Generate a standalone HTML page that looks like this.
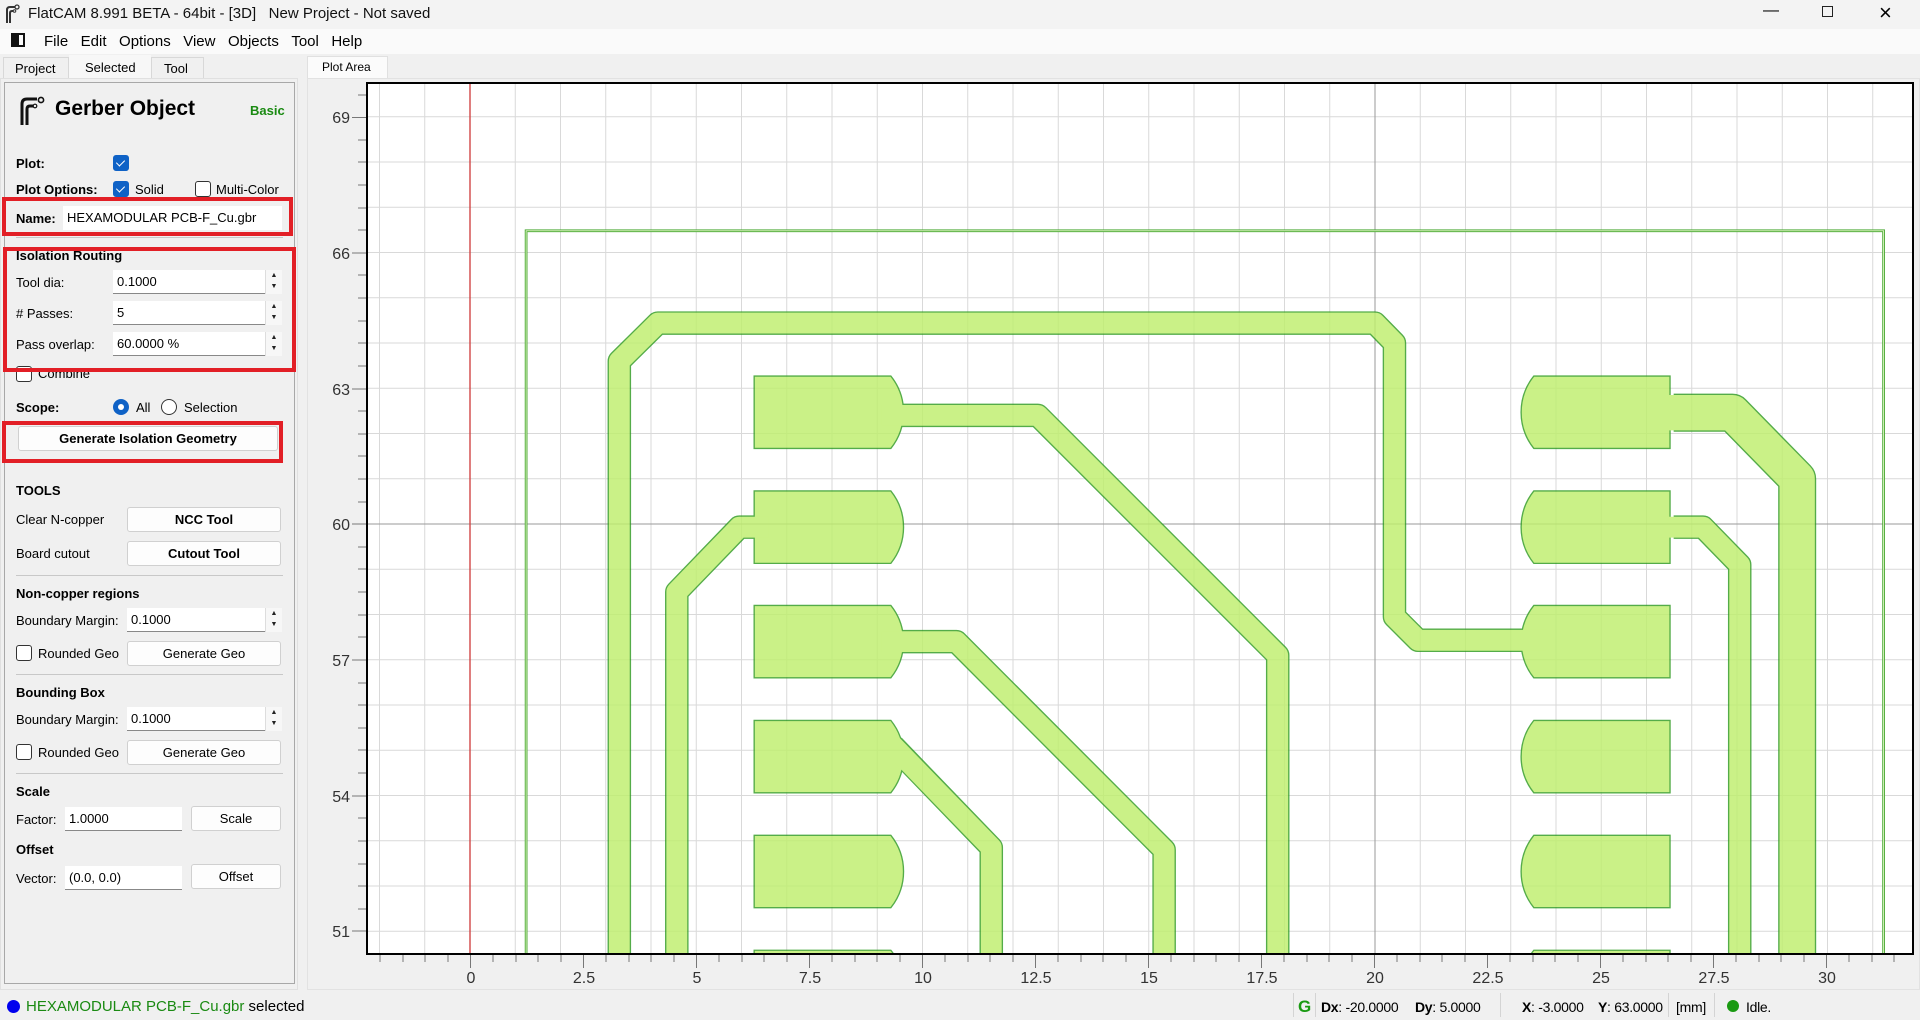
<!DOCTYPE html>
<html><head><meta charset="utf-8"><style>
*{box-sizing:border-box;margin:0;padding:0}
html,body{width:1920px;height:1020px;overflow:hidden}
body{background:#f0f0f0;font-family:"Liberation Sans",sans-serif;font-size:13px;color:#000;position:relative}
.a{position:absolute;white-space:nowrap}
.b{font-weight:bold}
.inp{position:absolute;background:#fff;border-bottom:1px solid #888;height:24px;line-height:24px;padding-left:4px;font-size:13px}
.spin{position:absolute;width:17px;height:24px;background:#f7f7f7;border-left:1px solid #ddd;font-size:7px;line-height:11px;text-align:center;color:#222}
.btn{position:absolute;background:#fdfdfd;border:1px solid #d0d0d0;border-radius:3px;text-align:center;height:25px;line-height:23px;font-size:13px}
.cb{position:absolute;width:16px;height:16px;border:1px solid #333;border-radius:3px;background:#fff}
.cbk{position:absolute;width:16px;height:16px;border-radius:3px;background:#0f62c6}
.cbk:after{content:"";position:absolute;left:5px;top:3px;width:4px;height:7px;border:solid #fff;border-width:0 1.5px 1.5px 0;transform:rotate(45deg)}
.sep{position:absolute;left:16px;width:267px;height:1px;background:#c8c8c8}
.red{position:absolute;border:4px solid #e21f26}
.st{position:absolute;top:999px;font-size:14px;letter-spacing:-0.3px;white-space:nowrap}
.vs{position:absolute;top:993px;width:1px;height:24px;background:#d4d4d4}
</style></head><body>
<div class="a" style="left:0;top:0;width:1920px;height:29px;background:#f3f3f3"></div>
<svg class="a" style="left:4px;top:4px" width="16" height="20" viewBox="0 0 16 20"><path d="M3 19V6q0-3 3-3h5M6 19V9q0-2 2-2h1" fill="none" stroke="#333" stroke-width="2"/><circle cx="13" cy="3" r="2" fill="none" stroke="#333" stroke-width="1.3"/><circle cx="10.5" cy="7" r="1.3" fill="none" stroke="#333" stroke-width="1"/></svg>
<div class="a" style="left:28px;top:5px;font-size:15px;color:#111">FlatCAM 8.991 BETA - 64bit - [3D]&nbsp;&nbsp;&nbsp;New Project - Not saved</div>
<div class="a" style="left:1763px;top:2px;font-size:16px">&#8212;</div>
<div class="a" style="left:1822px;top:6px;width:11px;height:11px;border:1px solid #222"></div>
<div class="a" style="left:1879px;top:0px;font-size:22px;font-weight:300">&#215;</div>
<div class="a" style="left:0;top:29px;width:1920px;height:25px;background:#fafafa"></div>
<div class="a" style="left:11px;top:33px;width:14px;height:14px;border:2px solid #111;border-left-width:8px"></div>
<div class="a" style="left:44px;top:33px;font-size:15px">File&nbsp;&nbsp;&nbsp;Edit&nbsp;&nbsp;&nbsp;Options&nbsp;&nbsp;&nbsp;View&nbsp;&nbsp;&nbsp;Objects&nbsp;&nbsp;&nbsp;Tool&nbsp;&nbsp;&nbsp;Help</div>
<div class="a" style="left:3px;top:57px;width:66px;height:22px;background:#f0f0f0;border:1px solid #d8d8d8;border-bottom:none"></div>
<div class="a" style="left:15px;top:61px">Project</div>
<div class="a" style="left:69px;top:55px;width:82px;height:24px;background:#f7f7f7"></div>
<div class="a" style="left:85px;top:60px">Selected</div>
<div class="a" style="left:151px;top:57px;width:53px;height:22px;border:1px solid #d8d8d8;border-bottom:none"></div>
<div class="a" style="left:164px;top:61px">Tool</div>
<div class="a" style="left:307px;top:56px;width:81px;height:22px;background:#fbfbfb;border:1px solid #e0e0e0;border-bottom:none"></div>
<div class="a" style="left:322px;top:60px;font-size:12px">Plot Area</div>
<div class="a" style="left:0;top:78px;width:298px;height:912px;border:1px solid #e0e0e0"></div>
<div class="a" style="left:4px;top:82px;width:291px;height:902px;border:1px solid #a8a8a8;background:#f0f0f0"></div>
<svg class="a" style="left:18px;top:96px" width="28" height="30" viewBox="0 0 28 30"><path d="M4 29V8q0-5 5-5h10M9 29V13q0-3 3-3h3" fill="none" stroke="#111" stroke-width="3"/><circle cx="23" cy="4" r="2.6" fill="none" stroke="#111" stroke-width="1.6"/><circle cx="17" cy="10" r="1.8" fill="none" stroke="#111" stroke-width="1.2"/></svg>
<div class="a b" style="left:55px;top:97px;font-size:21px">Gerber Object</div>
<div class="a b" style="left:250px;top:103px;color:#1a8a12">Basic</div>
<div class="a b" style="left:16px;top:156px">Plot:</div>
<div class="cbk" style="left:113px;top:155px"></div>
<div class="a b" style="left:16px;top:182px">Plot Options:</div>
<div class="cbk" style="left:113px;top:181px"></div>
<div class="a" style="left:135px;top:182px">Solid</div>
<div class="cb" style="left:195px;top:181px"></div>
<div class="a" style="left:216px;top:182px">Multi-Color</div>
<div class="a b" style="left:16px;top:211px">Name:</div>
<div class="inp" style="left:63px;top:206px;width:219px;border:none">HEXAMODULAR PCB-F_Cu.gbr</div>
<div class="red" style="left:2px;top:197px;width:291px;height:39px"></div>
<div class="sep" style="top:237px"></div>
<div class="a b" style="left:16px;top:248px">Isolation Routing</div>
<div class="a" style="left:16px;top:275px">Tool dia:</div>
<div class="inp" style="left:113px;top:270px;width:169px">0.1000</div><div class="spin" style="left:265px;top:270px">&#9650;<br>&#9660;</div>
<div class="a" style="left:16px;top:306px"># Passes:</div>
<div class="inp" style="left:113px;top:301px;width:169px">5</div><div class="spin" style="left:265px;top:301px">&#9650;<br>&#9660;</div>
<div class="a" style="left:16px;top:337px">Pass overlap:</div>
<div class="inp" style="left:113px;top:332px;width:169px">60.0000 %</div><div class="spin" style="left:265px;top:332px">&#9650;<br>&#9660;</div>
<div class="cb" style="left:16px;top:366px"></div>
<div class="a" style="left:38px;top:366px">Combine</div>
<div class="red" style="left:3px;top:247px;width:293px;height:125px"></div>
<div class="a b" style="left:16px;top:400px">Scope:</div>
<div class="a" style="left:113px;top:399px;width:16px;height:16px;border-radius:50%;background:#0f62c6"><div style="margin:5px;width:6px;height:6px;border-radius:50%;background:#fff"></div></div>
<div class="a" style="left:136px;top:400px">All</div>
<div class="a" style="left:161px;top:399px;width:16px;height:16px;border-radius:50%;border:1px solid #333;background:#fff"></div>
<div class="a" style="left:184px;top:400px">Selection</div>
<div class="btn b" style="left:18px;top:426px;width:260px">Generate Isolation Geometry</div>
<div class="red" style="left:2px;top:421px;width:281px;height:42px"></div>
<div class="a b" style="left:16px;top:483px">TOOLS</div>
<div class="a" style="left:16px;top:512px">Clear N-copper</div>
<div class="btn b" style="left:127px;top:507px;width:154px">NCC Tool</div>
<div class="a" style="left:16px;top:546px">Board cutout</div>
<div class="btn b" style="left:127px;top:541px;width:154px">Cutout Tool</div>
<div class="sep" style="top:575px"></div>
<div class="a b" style="left:16px;top:586px">Non-copper regions</div>
<div class="a" style="left:16px;top:613px">Boundary Margin:</div>
<div class="inp" style="left:127px;top:608px;width:155px">0.1000</div><div class="spin" style="left:265px;top:608px">&#9650;<br>&#9660;</div>
<div class="cb" style="left:16px;top:645px"></div>
<div class="a" style="left:38px;top:646px">Rounded Geo</div>
<div class="btn" style="left:127px;top:641px;width:154px">Generate Geo</div>
<div class="sep" style="top:674px"></div>
<div class="a b" style="left:16px;top:685px">Bounding Box</div>
<div class="a" style="left:16px;top:712px">Boundary Margin:</div>
<div class="inp" style="left:127px;top:707px;width:155px">0.1000</div><div class="spin" style="left:265px;top:707px">&#9650;<br>&#9660;</div>
<div class="cb" style="left:16px;top:744px"></div>
<div class="a" style="left:38px;top:745px">Rounded Geo</div>
<div class="btn" style="left:127px;top:740px;width:154px">Generate Geo</div>
<div class="sep" style="top:773px"></div>
<div class="a b" style="left:16px;top:784px">Scale</div>
<div class="a" style="left:16px;top:812px">Factor:</div>
<div class="inp" style="left:65px;top:807px;width:117px">1.0000</div>
<div class="btn" style="left:191px;top:806px;width:90px">Scale</div>
<div class="a b" style="left:16px;top:842px">Offset</div>
<div class="a" style="left:16px;top:871px">Vector:</div>
<div class="inp" style="left:65px;top:866px;width:117px">(0.0, 0.0)</div>
<div class="btn" style="left:191px;top:864px;width:90px">Offset</div>
<div class="a" style="left:307px;top:78px;width:1613px;height:912px;border:1px solid #e2e2e2;background:#f0f0f0"></div>
<div class="a" style="left:366px;top:82px;width:1548px;height:873px;background:#fff;border:2px solid #000"></div>
<svg class="a" style="left:0;top:0" width="1920" height="1020">
<defs><clipPath id="c"><rect x="368" y="84" width="1544" height="869"/></clipPath></defs>
<g clip-path="url(#c)">
<g transform="matrix(45.25 0 0 -45.25 470 3239)">
<g fill="none" stroke="#d9d9d9" stroke-width="0.022">
<path d="M-2 40V80M-1 40V80M1 40V80M2 40V80M3 40V80M4 40V80M5 40V80M6 40V80M7 40V80M8 40V80M9 40V80M10 40V80M11 40V80M12 40V80M13 40V80M14 40V80M15 40V80M16 40V80M17 40V80M18 40V80M19 40V80M21 40V80M22 40V80M23 40V80M24 40V80M25 40V80M26 40V80M27 40V80M28 40V80M29 40V80M30 40V80M31 40V80M32 40V80M33 40V80"/>
<path d="M-5 49H40M-5 50H40M-5 51H40M-5 52H40M-5 53H40M-5 54H40M-5 55H40M-5 56H40M-5 57H40M-5 58H40M-5 59H40M-5 61H40M-5 62H40M-5 63H40M-5 64H40M-5 65H40M-5 66H40M-5 67H40M-5 68H40M-5 69H40M-5 70H40"/>
</g>
<path d="M20 40V80M-5 60H40" stroke="#9a9a9a" stroke-width="0.022" fill="none"/>
<path d="M0 40V80" stroke="#d04040" stroke-width="0.03" fill="none"/>
<rect x="1.24" y="40" width="30.0" height="26.48" fill="none" stroke="#48a832" stroke-width="0.06"/>
<rect x="1.24" y="40" width="30.0" height="26.48" fill="none" stroke="#e4f8c8" stroke-width="0.02"/>
<g opacity="0.82">
<g fill="none" stroke="#2f9a22" stroke-linejoin="round">
<g stroke-width="0.52">
<path d="M3.3 45V63.6L4.15 64.44H20.0L20.43 64.0V57.95L20.95 57.43H23.6"/>
<path d="M9.4 62.4H12.55L17.85 57.1V45"/>
<path d="M6.4 59.93H5.95L4.57 58.5V45"/>
<path d="M9.4 57.4H10.75L15.34 52.8V45"/>
<path d="M9.35 55.1L11.52 52.85V45"/>
<path d="M26.6 59.93H27.25L28.06 59.1V45"/>
</g>
<path d="M26.6 62.46H27.9L29.33 61.0V45" stroke-width="0.84"/>
</g>
<g fill="#bfef6d" stroke="#2f9a22" stroke-width="0.03">
<path d="M6.28 61.67H9.3A1.28 1.28 0 0 1 9.3 63.27H6.28Z"/>
<path d="M6.28 59.13H9.3A1.28 1.28 0 0 1 9.3 60.73H6.28Z"/>
<path d="M6.28 56.6H9.3A1.28 1.28 0 0 1 9.3 58.2H6.28Z"/>
<path d="M6.28 54.06H9.3A1.28 1.28 0 0 1 9.3 55.66H6.28Z"/>
<path d="M6.28 51.52H9.3A1.28 1.28 0 0 1 9.3 53.12H6.28Z"/>
<path d="M6.28 48.98H9.3A1.28 1.28 0 0 1 9.3 50.58H6.28Z"/>
<path d="M23.51 63.27H26.52V61.67H23.51A1.28 1.28 0 0 0 23.51 63.27Z"/>
<path d="M23.51 60.73H26.52V59.13H23.51A1.28 1.28 0 0 0 23.51 60.73Z"/>
<path d="M23.51 58.2H26.52V56.6H23.51A1.28 1.28 0 0 0 23.51 58.2Z"/>
<path d="M23.51 55.66H26.52V54.06H23.51A1.28 1.28 0 0 0 23.51 55.66Z"/>
<path d="M23.51 53.12H26.52V51.52H23.51A1.28 1.28 0 0 0 23.51 53.12Z"/>
<path d="M23.51 50.58H26.52V48.98H23.51A1.28 1.28 0 0 0 23.51 50.58Z"/>
</g>
<g fill="none" stroke="#bfef6d" stroke-linejoin="round">
<g stroke-width="0.46">
<path d="M3.3 45V63.6L4.15 64.44H20.0L20.43 64.0V57.95L20.95 57.43H23.8"/>
<path d="M9.1 62.4H12.55L17.85 57.1V45"/>
<path d="M6.6 59.93H5.95L4.57 58.5V45"/>
<path d="M9.1 57.4H10.75L15.34 52.8V45"/>
<path d="M9.1 55.35L11.52 52.85V45"/>
<path d="M26.3 59.93H27.25L28.06 59.1V45"/>
</g>
<path d="M26.3 62.46H27.9L29.33 61.0V45" stroke-width="0.78"/>
</g>
</g>
</g>
</g>
</svg>
<svg class="a" style="left:0;top:0" width="1920" height="1020">
<g stroke="#777" stroke-width="1">
<path d="M352 117.5H366M352 253H366M352 389H366M352 524H366M352 660H366M352 796H366M352 931H366"/>
<path d="M358 140H366M358 162H366M358 185H366M358 208H366M358 230H366M358 275H366M358 298H366M358 321H366M358 343H366M358 366H366M358 411H366M358 434H366M358 456H366M358 479H366M358 502H366M358 547H366M358 569H366M358 592H366M358 615H366M358 637H366M358 683H366M358 705H366M358 728H366M358 750H366M358 773H366M358 818H366M358 841H366M358 864H366M358 886H366M358 909H366M358 95H366"/>
<path d="M470.5 955V968M583.5 955V968M696.5 955V968M809.5 955V968M922.5 955V968M1035.5 955V968M1148.5 955V968M1261.5 955V968M1374.5 955V968M1487.5 955V968M1600.5 955V968M1713.5 955V968M1826.5 955V968"/>
<path d="M380 955V962M403 955V962M425 955V962M448 955V962M493 955V962M516 955V962M538 955V962M561 955V962M606 955V962M629 955V962M651 955V962M674 955V962M719 955V962M742 955V962M764 955V962M787 955V962M832 955V962M855 955V962M877 955V962M900 955V962M945 955V962M968 955V962M990 955V962M1013 955V962M1058 955V962M1081 955V962M1103 955V962M1126 955V962M1171 955V962M1194 955V962M1216 955V962M1239 955V962M1284 955V962M1307 955V962M1329 955V962M1352 955V962M1397 955V962M1420 955V962M1442 955V962M1465 955V962M1510 955V962M1533 955V962M1555 955V962M1578 955V962M1623 955V962M1646 955V962M1668 955V962M1691 955V962M1736 955V962M1759 955V962M1781 955V962M1804 955V962M1849 955V962M1872 955V962M1894 955V962"/>
</g>
<g font-family="Liberation Sans, sans-serif" font-size="16" fill="#333" text-anchor="end">
<text x="350" y="123">69</text><text x="350" y="259">66</text><text x="350" y="395">63</text><text x="350" y="530">60</text><text x="350" y="666">57</text><text x="350" y="802">54</text><text x="350" y="937">51</text>
</g>
<g font-family="Liberation Sans, sans-serif" font-size="16" fill="#333" text-anchor="middle">
<text x="471" y="983">0</text><text x="584" y="983">2.5</text><text x="697" y="983">5</text><text x="810" y="983">7.5</text><text x="923" y="983">10</text><text x="1036" y="983">12.5</text><text x="1149" y="983">15</text><text x="1262" y="983">17.5</text><text x="1375" y="983">20</text><text x="1488" y="983">22.5</text><text x="1601" y="983">25</text><text x="1714" y="983">27.5</text><text x="1827" y="983">30</text>
</g>
</svg>
<div class="a" style="left:7px;top:1000px;width:13px;height:13px;border-radius:50%;background:#0000ee"></div>
<div class="a" style="left:26px;top:998px;font-size:15px"><span style="color:#1a8a12">HEXAMODULAR PCB-F_Cu.gbr</span> selected</div>
<div class="vs" style="left:1293px"></div>
<div class="a b" style="left:1298px;top:997px;font-size:17px;color:#1a9a12">G</div>
<div class="vs" style="left:1315px"></div>
<div class="st" style="left:1321px"><b>Dx</b>: -20.0000</div>
<div class="st" style="left:1415px"><b>Dy</b>: 5.0000</div>
<div class="vs" style="left:1500px"></div>
<div class="st" style="left:1522px"><b>X</b>: -3.0000</div>
<div class="st" style="left:1598px"><b>Y</b>: 63.0000</div>
<div class="vs" style="left:1668px"></div>
<div class="st" style="left:1676px">[mm]</div>
<div class="vs" style="left:1714px"></div>
<div class="a" style="left:1727px;top:1000px;width:12px;height:12px;border-radius:50%;background:#1a9a12"></div>
<div class="st" style="left:1746px">Idle.</div>
</body></html>
